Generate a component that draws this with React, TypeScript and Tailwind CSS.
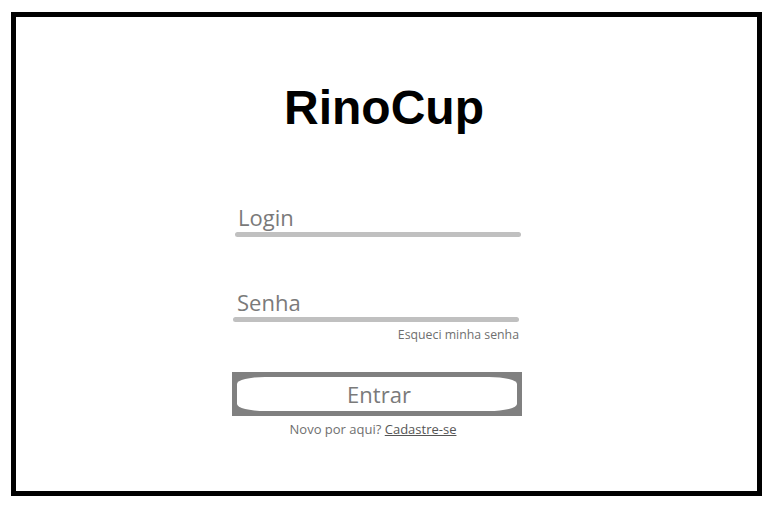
export default function App() {
  return (
    <div className="min-h-screen bg-white pt-[12px] pl-[11px]">
      <div className="w-[751px] h-[484px] border-[5px] border-black bg-white">
        <h1 className="mt-[67px] text-center text-[48px] leading-[48px] font-bold text-black pr-[5px] font-['Liberation_Sans',Arial,sans-serif]">
          RinoCup
        </h1>

        <form className="ml-[216px] w-[290px] mt-[73px] font-['Open_Sans',sans-serif]">
          {/* Login */}
          <div>
            <div className="pl-[6px] text-[22px] leading-[24px] text-[#7a7a7a]">Login</div>
            <div className="ml-[3px] mt-[3px] w-[286px] h-[5px] rounded-full bg-[#c0c0c0]" />
          </div>

          {/* Senha */}
          <div className="mt-[53px]">
            <div className="pl-[5px] text-[22px] leading-[24px] text-[#7a7a7a]">Senha</div>
            <div className="ml-[1px] mt-[3px] w-[286px] h-[5px] rounded-full bg-[#c0c0c0]" />
            <div className="mt-[5px] pr-[3px] text-right text-[12.3px] leading-[16px] text-[#6f6f6f]">
              Esqueci minha senha
            </div>
          </div>

          <button
            type="button"
            className="mt-[29px] block w-[290px] h-[44px] bg-[#808080] px-[5px] py-[5px]"
          >
            <span className="flex h-full w-full items-center justify-center rounded-[28px_/_7px] bg-white pl-[4px] text-[22px] text-[#7a7a7a]">
              Entrar
            </span>
          </button>

          <p className="mt-[5px] pr-[8px] text-center text-[13px] leading-[16px] text-[#6f6f6f]">
            Novo por aqui? <a className="underline text-[#555]">Cadastre-se</a>
          </p>
        </form>
      </div>
    </div>
  )
}
